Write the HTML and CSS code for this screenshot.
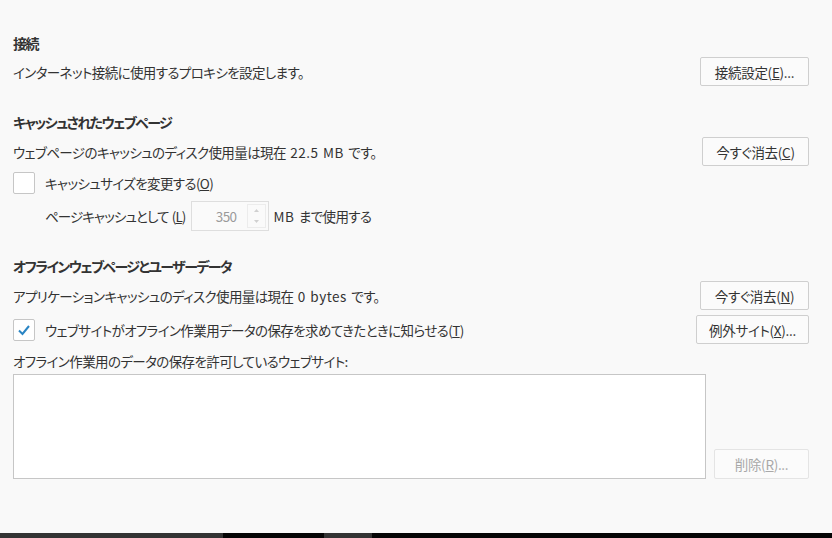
FILE: index.html
```html
<!DOCTYPE html>
<html lang="ja">
<head>
  <meta charset="UTF-8" />
  <title>ネットワーク</title>
  <link rel="stylesheet" href="styles.css">
</head>
<body>
  <div class="page">
    <h2 class="title first">接続</h2>
    <div class="row">
      <span>インターネット接続に使用するプロキシを設定します。</span>
      <button class="btn btn-wide">接続設定(<u>E</u>)...</button>
    </div>

    <h2 class="title">キャッシュされたウェブページ</h2>
    <div class="row">
      <span>ウェブページのキャッシュのディスク使用量は現在 <span class="lat">22.5 MB</span> です。</span>
      <button class="btn">今すぐ消去(<u>C</u>)</button>
    </div>
    <label class="check-row">
      <span class="check"></span>
      <span>キャッシュサイズを変更する(<u>O</u>)</span>
    </label>
    <div class="spin-row">
      <span class="spin-label">ページキャッシュとして (<u>L</u>)</span>
      <div class="spin">
        <span class="spin-val">350</span>
        <span class="spin-btns">
          <svg width="5" height="3" viewBox="0 0 5 3"><path d="M0 3 L2.5 0 L5 3 Z" fill="#d0d0d0"/></svg>
          <svg width="5" height="3" viewBox="0 0 5 3"><path d="M0 0 L2.5 3 L5 0 Z" fill="#d0d0d0"/></svg>
        </span>
      </div>
      <span><span class="lat">MB</span> まで使用する</span>
    </div>

    <h2 class="title">オフラインウェブページとユーザーデータ</h2>
    <div class="row">
      <span>アプリケーションキャッシュのディスク使用量は現在 <span class="lat">0 bytes</span> です。</span>
      <button class="btn btn-wide">今すぐ消去(<u>N</u>)</button>
    </div>
    <div class="row row-check">
      <label class="check-label">
        <span class="check">
          <svg width="14" height="12" viewBox="0 0 14 12"><path d="M2 6.5 L5.5 10 L12 2" fill="none" stroke="#2a85c4" stroke-width="2"/></svg>
        </span>
        <span>ウェブサイトがオフライン作業用データの保存を求めてきたときに知らせる(<u>T</u>)</span>
      </label>
      <button class="btn btn-xwide">例外サイト(<u>X</u>)...</button>
    </div>
    <div class="list-label">オフライン作業用のデータの保存を許可しているウェブサイト:</div>
    <div class="list-row">
      <div class="listbox"></div>
      <button class="btn btn-disabled" disabled>削除(<u>R</u>)...</button>
    </div>
  </div>

  <div class="taskbar">
    <span class="seg seg-gray" style="width: 223px"></span>
    <span class="seg" style="width: 101px"></span>
    <span class="seg seg-gray" style="width: 48px"></span>
    <span class="seg seg-fill"></span>
  </div>
</body>
</html>
```

FILE: styles.css
```css
html, body {
  margin: 0;
  height: 100%;
}
body {
  background: #f9f9f9;
  color: #333;
  font-family: "Noto Sans CJK JP", "Noto Sans", sans-serif;
  font-size: 13.5px;
  letter-spacing: -0.6px;
  word-spacing: 2px;
  font-feature-settings: "palt";
  display: flex;
  flex-direction: column;
}
.lat {
  letter-spacing: 0.5px;
  word-spacing: 1px;
}
.page {
  padding: 0 23px 0 13px;
  flex: 1;
}
.title {
  font-size: 14px;
  font-weight: bold;
  letter-spacing: -1.6px;
  line-height: 20px;
  margin: 26px 0 5px;
}
.title.first {
  margin-top: 33px;
  margin-bottom: 4px;
}
.row {
  display: flex;
  align-items: center;
  justify-content: space-between;
  height: 29px;
}
.btn {
  font: inherit;
  letter-spacing: -0.3px;
  font-feature-settings: "palt";
  color: #333;
  background: #fbfbfb;
  border: 1px solid #cfcfcf;
  border-radius: 2px;
  height: 29px;
  width: 107px;
  padding: 0;
}
.btn-wide {
  width: 109px;
}
.btn-xwide {
  width: 113px;
}
.btn-disabled {
  color: #a8a8a8;
  border-color: #e4e4e4;
  width: 95px;
  height: 30px;
}
.check-row {
  display: flex;
  align-items: center;
  gap: 10px;
  margin-top: 6px;
  height: 22px;
}
.check {
  width: 20px;
  height: 20px;
  border: 1px solid #c6c6c6;
  border-radius: 2px;
  background: #fff;
  display: flex;
  align-items: center;
  justify-content: center;
}
.spin-row {
  display: flex;
  align-items: center;
  margin: 7px 0 0 32px;
  height: 29px;
}
.spin-label {
  letter-spacing: -0.9px;
  word-spacing: 1px;
}
.spin {
  display: flex;
  align-items: stretch;
  width: 76px;
  height: 28px;
  border: 1px solid #dedede;
  background: #fafafa;
  margin: 0 5px 0 5px;
}
.spin-val {
  flex: 1;
  color: #9a9a9a;
  display: flex;
  align-items: center;
  justify-content: flex-end;
  padding-right: 10px;
}
.spin-btns {
  width: 17px;
  margin: 2px 2px 2px 0;
  display: flex;
  flex-direction: column;
  align-items: center;
  justify-content: space-around;
  border: 1px solid #ececec;
}
.row-check {
  margin-top: 5px;
}
.check-label {
  display: flex;
  align-items: center;
  gap: 10px;
}
.list-label {
  margin-top: 9px;
  line-height: 16px;
}
.list-row {
  display: flex;
  align-items: flex-end;
  gap: 8px;
  margin-top: 5px;
}
.listbox {
  flex: 1;
  height: 103px;
  background: #fff;
  border: 1px solid #c6c6c6;
}
.taskbar {
  display: flex;
  height: 5px;
  background: #050505;
}
.seg {
  display: block;
  background: #050505;
}
.seg-gray {
  background: #333;
}
.seg-fill {
  flex: 1;
}
```
